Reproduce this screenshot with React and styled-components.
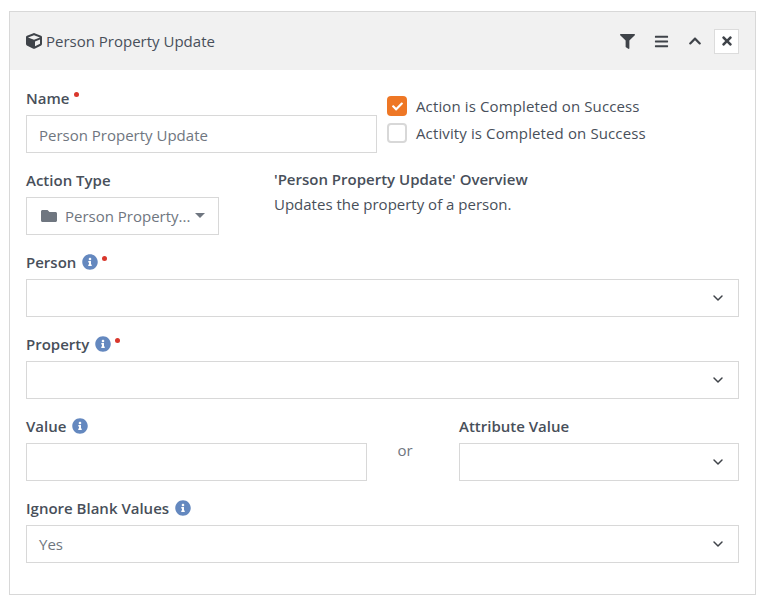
import React from 'react'
import styled, { createGlobalStyle } from 'styled-components'
import { FaCube, FaFilter, FaBars, FaChevronUp, FaTimes, FaFolder, FaInfoCircle, FaCheck } from 'react-icons/fa'
import { LuChevronDown } from 'react-icons/lu'

const Global = createGlobalStyle`
  html, body {
    margin: 0;
    background: #fff;
  }
  body {
    font-family: "Open Sans", "Liberation Sans", sans-serif;
    font-size: 15px;
    color: #484f5a;
  }
`
const Panel = styled.div`
  box-sizing: border-box;
  width: 747px;
  height: 584px;
  margin: 11px 0 0 9px;
  border: 1px solid #d8d8d8;
`
const Header = styled.div`
  height: 58px;
  background: #f1f1f1;
  display: flex;
  align-items: center;
  padding: 0 16px;
`
const Title = styled.div`
  flex: 1;
  display: flex;
  align-items: center;
  gap: 4px;
  color: #484f5a;
`
const Actions = styled.div`
  display: flex;
  align-items: center;
  color: #3f4349;
`
const ActionIcon = styled.span`
  width: 34px;
  display: flex;
  justify-content: center;
`
const CloseButton = styled.span`
  box-sizing: border-box;
  width: 25px;
  height: 25px;
  margin-left: 2px;
  display: flex;
  align-items: center;
  justify-content: center;
  background: #fff;
  border: 1px solid #dcdcdc;
`
const Body = styled.div`
  padding: 18px 16px 0;
  display: flex;
  flex-direction: column;
  gap: 17px;
`
const Row = styled.div`
  display: grid;
  grid-template-columns: ${p => p.$cols};
  column-gap: ${p => p.$gap || 0}px;
`
const Label = styled.div`
  height: 20px;
  margin-bottom: 7px;
  display: flex;
  align-items: center;
  gap: 5.5px;
  font-weight: 600;
  line-height: 20px;
`
const Required = styled.span`
  width: 5px;
  height: 5px;
  margin: -7px 0 0 -1px;
  border-radius: 50%;
  background: #d9372c;
`
const Info = styled(FaInfoCircle)`
  color: #6488bf;
  width: 16px;
  height: 16px;
`
const Field = styled.div`
  box-sizing: border-box;
  height: 38px;
  border: 1px solid #d8d8d8;
  background: #fff;
  display: flex;
  align-items: center;
  justify-content: space-between;
  padding: 0 12px;
  color: #6f7680;
`
const TextInput = styled(Field)`
  padding-top: 2px;
`
const Chevron = styled(LuChevronDown)`
  width: 16px;
  height: 16px;
  color: #3f4349;
  stroke-width: 2.2;
`
const Checks = styled.div`
  padding-top: 8px;
  display: flex;
  flex-direction: column;
  gap: 7px;
`
const CheckRow = styled.div`
  display: flex;
  align-items: center;
  gap: 9px;
  height: 20px;
  letter-spacing: .12px;
`
const Box = styled.span`
  box-sizing: border-box;
  width: 20px;
  height: 20px;
  border-radius: 4px;
  display: flex;
  align-items: center;
  justify-content: center;
  background: ${p => (p.$checked ? '#ee7725' : '#fff')};
  border: ${p => (p.$checked ? 'none' : '2px solid #d8d8d8')};
  color: #fff;
`
const TypeButton = styled.div`
  box-sizing: border-box;
  width: 193px;
  height: 38px;
  border: 1px solid #d8d8d8;
  display: flex;
  align-items: center;
  padding: 0 13px 0 14px;
  color: #6f7680;
  white-space: nowrap;
`
const FolderIcon = styled(FaFolder)`
  flex: none;
  width: 16px;
  height: 16px;
  margin-right: 8px;
  color: #6f7680;
`
const Caret = styled.span`
  flex: none;
  width: 0;
  height: 0;
  margin: -2px 0 0 auto;
  border-left: 5px solid transparent;
  border-right: 5px solid transparent;
  border-top: 5px solid #6f7680;
`
const Overview = styled.div`
  margin-top: -1px;
  line-height: 21px;
`
const OverviewTitle = styled.div`
  font-weight: 600;
  margin-bottom: 4px;
`
const Or = styled.div`
  padding: 4px 16px 0 0;
  align-self: center;
  text-align: center;
  line-height: 21px;
  color: #6f7680;
`

const FieldLabel = ({ children, info, required }) => (
  <Label>
    {children}
    {info && <Info />}
    {required && <Required />}
  </Label>
)

const Select = ({ value }) => (
  <Field>
    <span>{value}</span>
    <Chevron />
  </Field>
)

export default function App() {
  return (
    <>
      <Global />
      <Panel>
        <Header>
          <Title>
            <FaCube size={16} color="#3f4349" />
            Person Property Update
          </Title>
          <Actions>
            <ActionIcon><FaFilter size={15} /></ActionIcon>
            <ActionIcon><FaBars size={15} /></ActionIcon>
            <ActionIcon><FaChevronUp size={14} /></ActionIcon>
            <CloseButton><FaTimes size={14} /></CloseButton>
          </Actions>
        </Header>
        <Body>
          <Row $cols="351px 1fr" $gap={10}>
            <div>
              <FieldLabel required>Name</FieldLabel>
              <TextInput>Person Property Update</TextInput>
            </div>
            <Checks>
              <CheckRow>
                <Box $checked><FaCheck size={11} /></Box>
                Action is Completed on Success
              </CheckRow>
              <CheckRow>
                <Box />
                Activity is Completed on Success
              </CheckRow>
            </Checks>
          </Row>
          <Row $cols="248px 1fr">
            <div>
              <FieldLabel>Action Type</FieldLabel>
              <TypeButton>
                <FolderIcon />
                Person Property...
                <Caret />
              </TypeButton>
            </div>
            <Overview>
              <OverviewTitle>'Person Property Update' Overview</OverviewTitle>
              Updates the property of a person.
            </Overview>
          </Row>
          <div>
            <FieldLabel info required>Person</FieldLabel>
            <Select />
          </div>
          <div>
            <FieldLabel info required>Property</FieldLabel>
            <Select />
          </div>
          <Row $cols="341px 1fr 280px">
            <div>
              <FieldLabel info>Value</FieldLabel>
              <Field />
            </div>
            <Or>or</Or>
            <div>
              <FieldLabel>Attribute Value</FieldLabel>
              <Select />
            </div>
          </Row>
          <div>
            <FieldLabel info>Ignore Blank Values</FieldLabel>
            <Select value="Yes" />
          </div>
        </Body>
      </Panel>
    </>
  )
}
